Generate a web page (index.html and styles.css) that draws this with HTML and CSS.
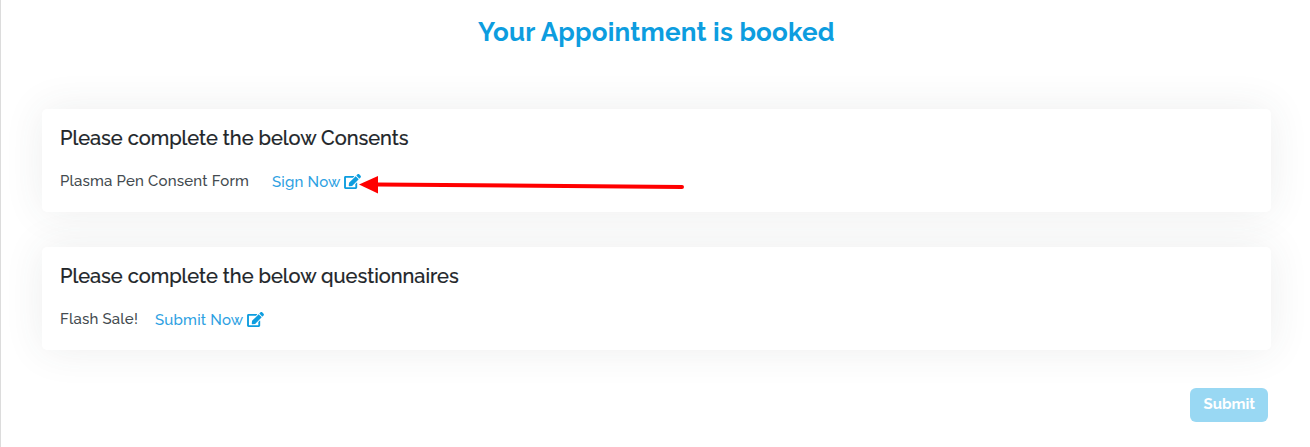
FILE: index.html
```
<!DOCTYPE html>
<html lang="en">
<head>
  <meta charset="UTF-8">
  <title>Your Appointment is booked</title>
  <link rel="stylesheet" href="styles.css">
</head>
<body>

<svg class="icon-defs" aria-hidden="true">
  <symbol id="edit" viewBox="0 0 576 512">
    <path d="M402.600 83.200l90.200 90.200c3.800 3.800 3.800 10 0 13.800L274.400 405.600l-92.800 10.300c-12.400 1.400-22.900-9.100-21.500-21.500l10.300-92.800L388.800 83.200c3.800-3.800 10-3.800 13.800 0zm162-22.900l-48.800-48.800c-15.200-15.200-39.900-15.200-55.200 0l-35.400 35.400c-3.800 3.800-3.800 10 0 13.800l90.200 90.200c3.800 3.800 10 3.800 13.800 0l35.400-35.400c15.200-15.300 15.200-40 0-55.200zM384 346.200V448H64V128h229.800c3.200 0 6.200-1.300 8.500-3.500l40-40c7.600-7.600 2.200-20.500-8.500-20.500H48C21.500 64 0 85.500 0 112v352c0 26.500 21.500 48 48 48h352c26.500 0 48-21.500 48-48V306.200c0-10.700-12.900-16-20.500-8.500l-40 40c-2.200 2.300-3.500 5.300-3.500 8.500z"/>
  </symbol>
</svg>

<main>
  <h1>Your Appointment is booked</h1>

  <section class="card">
    <h2>Please complete the below Consents</h2>
    <div class="form-item">
      <span class="consent-name">Plasma Pen Consent Form</span>
      <a class="action sign" href="#"><span>Sign Now</span><svg class="edit-icon"><use href="#edit"/></svg></a>
      <svg class="arrow" viewBox="0 0 326 18">
        <path d="M0 8.500 L19 0 V17.500 Z"/>
        <path class="line" d="M18 8.500 L323 11"/>
      </svg>
    </div>
  </section>

  <section class="card">
    <h2>Please complete the below questionnaires</h2>
    <div class="form-item">
      <span class="question-name">Flash Sale!</span>
      <a class="action submit" href="#"><span>Submit Now</span><svg class="edit-icon"><use href="#edit"/></svg></a>
    </div>
  </section>

  <div class="buttons">
    <button type="submit" class="submit-btn" disabled>Submit</button>
  </div>
</main>

</body>
</html>
```
FILE: styles.css
```
* {
  box-sizing: border-box;
}
body {
  margin: 0;
  font-family: Raleway, Lato, sans-serif;
  background-color: #fff;
  color: #444b50;
  overflow: hidden;
}
.icon-defs {
  display: none;
}
main {
  height: 447px;
  padding: 14px 39.5px 0 41.4px;
  border-left: 1px solid #dcdcdc;
}
h1 {
  margin: 0 0 59px;
  text-align: center;
  color: #0d9ddf;
  font-size: 26px;
  line-height: 36px;
  font-weight: 700;
  letter-spacing: 0.2px;
}
.card {
  height: 103px;
  margin-bottom: 35px;
  padding: 15px 17.6px;
  background: #fff;
  border-radius: 5px;
  box-shadow: 0 0 40px rgba(51, 65, 66, 0.09);
}
h2 {
  margin: 0 0 18px;
  color: #212529;
  font-size: 20px;
  line-height: 28px;
  font-weight: 500;
  white-space: nowrap;
  -webkit-text-stroke: 0.2px #212529;
}
.form-item {
  position: relative;
  display: flex;
  height: 22px;
  font-size: 15px;
  line-height: 22px;
  font-weight: 500;
  letter-spacing: 0.2px;
  white-space: nowrap;
}
.consent-name {
  width: 212px;
}
.question-name {
  width: 95px;
}
.action {
  display: flex;
  padding-top: 1px;
  color: #2da1e2;
  text-decoration: none;
}
.sign span {
  width: 72.5px;
}
.submit span {
  width: 92px;
}
.edit-icon {
  width: 17px;
  height: 15px;
  margin-top: 3px;
  fill: #0d9ddf;
}
.arrow {
  position: absolute;
  left: 299px;
  top: 6px;
  width: 326px;
  height: 18px;
  fill: #f00;
}
.arrow .line {
  stroke: #f00;
  stroke-width: 4;
  stroke-linecap: round;
}
.buttons {
  display: flex;
  justify-content: flex-end;
  margin-top: 38px;
  padding-right: 2.2px;
}
.submit-btn {
  width: 78px;
  height: 34px;
  padding: 0 0 2px;
  border: none;
  border-radius: 6px;
  background-color: #99d8f3;
  color: #fff;
  font: 700 15px Raleway, Lato, sans-serif;
}
```
